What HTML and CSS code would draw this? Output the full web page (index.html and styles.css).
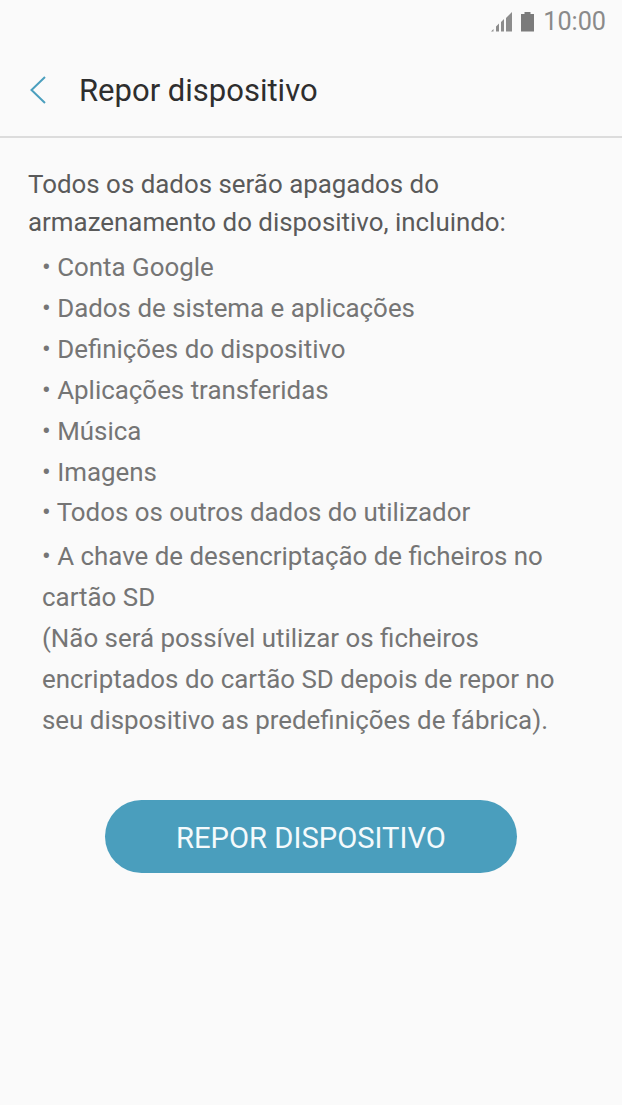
FILE: index.html
```
<!DOCTYPE html>
<html lang="pt">
<head>
<meta charset="utf-8">
<title>Repor dispositivo</title>
<link rel="stylesheet" href="styles.css">
</head>
<body>
<div class="status">
  <svg class="signal" width="22" height="22" viewBox="0 0 22 22"><path d="M0 20.500h2.500v-2.500zM5 20.500h3v-8l-3 3zM10 20.500h3V8l-3 3zM15 20.500h6V1l-6 6z" fill="#8c8c8c"/></svg>
  <svg class="battery" width="15" height="22" viewBox="0 0 15 22"><path d="M4.500 1h6v2h3.500v17.500H1V3h3.500z" fill="#7b7b7b"/></svg>
  <span class="time">10:00</span>
</div>
<header class="bar">
  <svg class="back" width="18" height="30" viewBox="0 0 18 30"><path d="M16 2 L2.500 15 L16 28" fill="none" stroke="#4b9fbe" stroke-width="2"/></svg>
  <h1 class="title">Repor dispositivo</h1>
</header>
<main class="content">
  <p class="intro">Todos os dados serão apagados do armazenamento do dispositivo, incluindo:</p>
  <ul class="items">
    <li>• Conta Google</li>
    <li>• Dados de sistema e aplicações</li>
    <li>• Definições do dispositivo</li>
    <li>• Aplicações transferidas</li>
    <li>• Música</li>
    <li>• Imagens</li>
    <li>• Todos os outros dados do utilizador</li>
  </ul>
  <p class="note">• A chave de desencriptação de ficheiros no cartão SD<br>(Não será possível utilizar os ficheiros encriptados do cartão SD depois de repor no seu dispositivo as predefinições de fábrica).</p>
  <div class="action"><button class="reset">REPOR DISPOSITIVO</button></div>
</main>
</body>
</html>
```
FILE: styles.css
```
* { box-sizing: border-box; }
html, body { margin: 0; padding: 0; }
body {
  width: 622px;
  height: 1105px;
  overflow: hidden;
  background: #fafafa;
  font-family: Roboto, sans-serif;
}
.status {
  height: 44px;
  display: flex;
  align-items: center;
  justify-content: flex-end;
  padding-right: 16px;
  color: #8a8a8a;
}
.signal { margin-right: 7px; }
.battery { margin-right: 8px; }
.time { font-size: 25.200px; line-height: 44px; }
.bar {
  height: 94px;
  display: flex;
  align-items: center;
  padding: 0 0 0 29px;
  border-bottom: 2px solid #dcdcdc;
}
.back { flex: none; margin-right: 32px; }
.title {
  margin: 0;
  font-size: 31px;
  line-height: 36px;
  padding-top: 1px;
  font-weight: 400;
  color: #2e2e2e;
}
.content { padding: 28px 28px 0; }
.intro {
  margin: 0 0 6px;
  font-size: 25.900px;
  line-height: 37.500px;
  color: #5a5a5a;
}
.items {
  list-style: none;
  margin: 0;
  padding: 0 0 0 14px;
  font-size: 25.900px;
  line-height: 40.900px;
  color: #757575;
}
.note {
  margin: 3px 0 0 14px;
  font-size: 25.900px;
  line-height: 41px;
  color: #757575;
}
.action {
  display: flex;
  justify-content: center;
  margin-top: 59px;
}
.reset {
  width: 412px;
  height: 73px;
  border: 0;
  border-radius: 37px;
  background: #4a9ebd;
  color: #f4fafc;
  font-family: Roboto, sans-serif;
  font-size: 29.200px;
  padding: 2px 0 0;
}
```
